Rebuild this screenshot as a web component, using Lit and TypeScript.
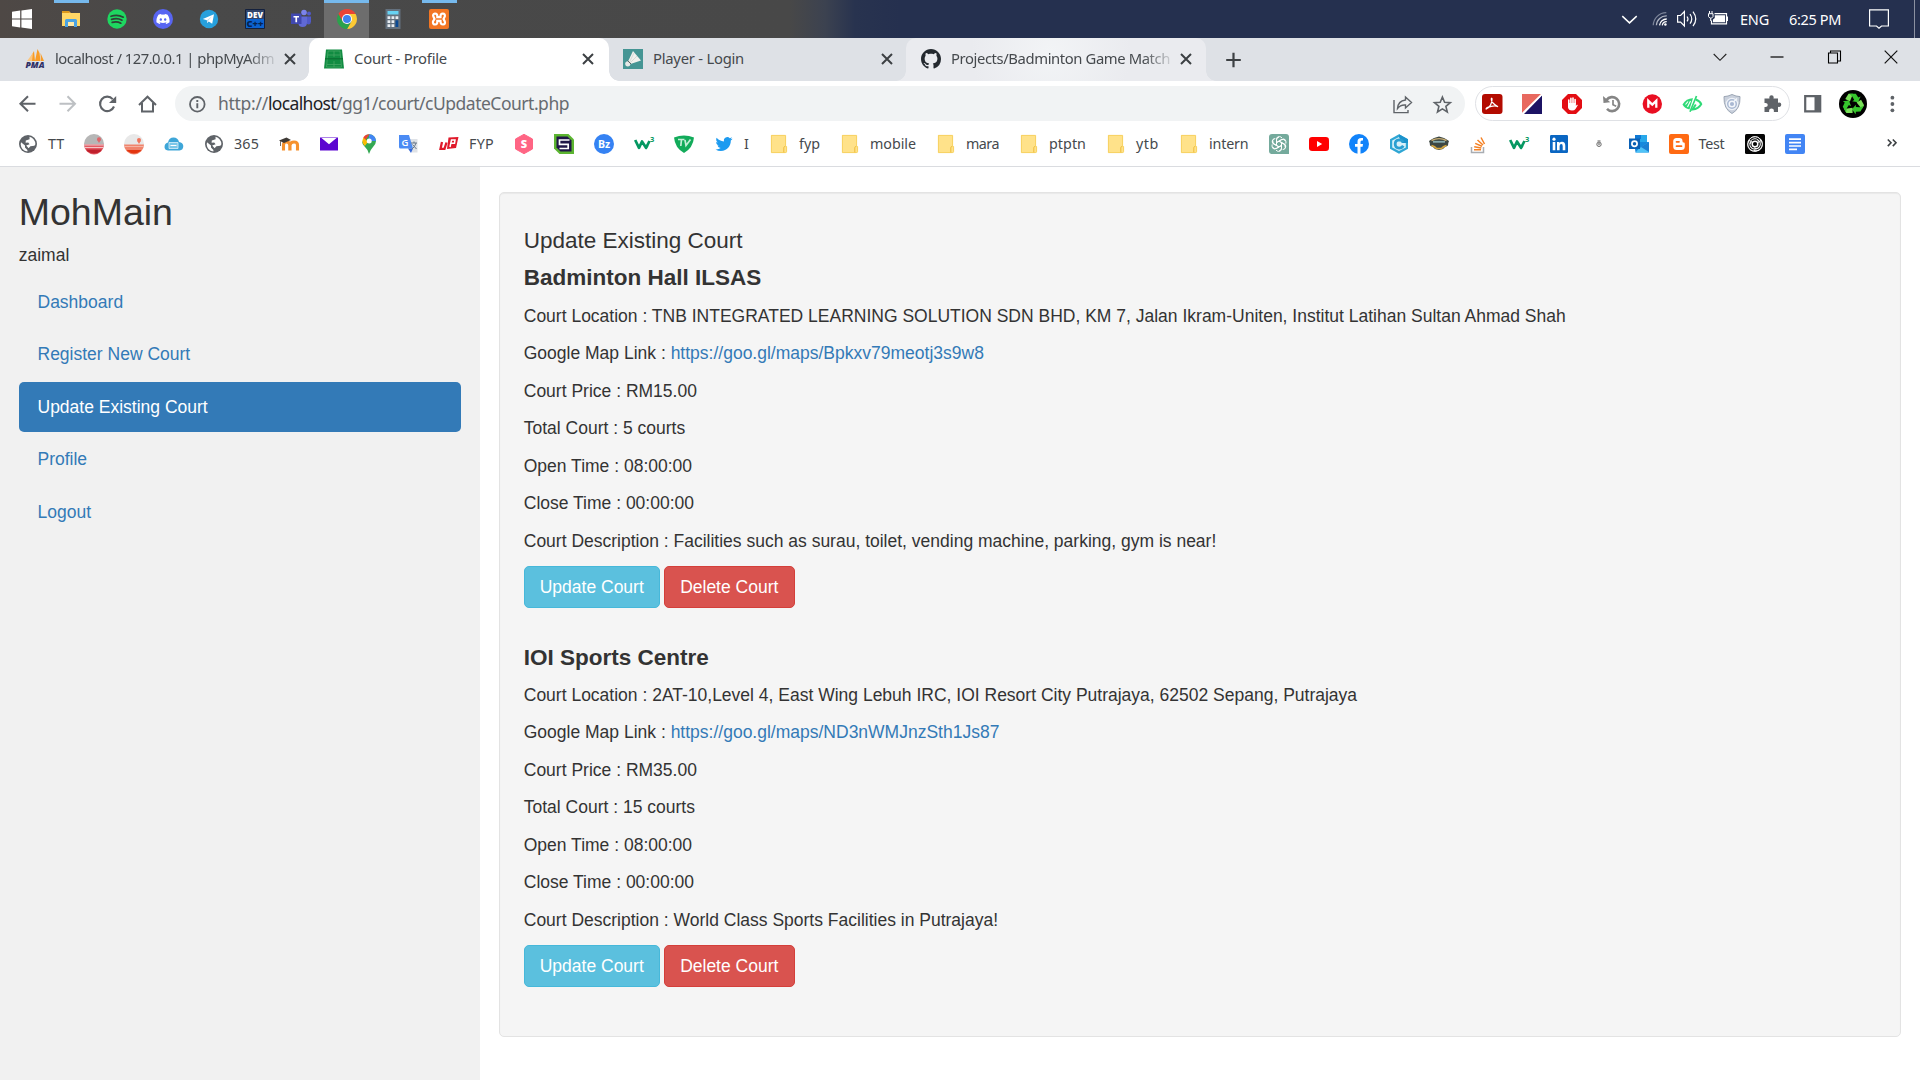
import { LitElement, html, svg, css, nothing } from "lit";
import { customElement, property } from "lit/decorators.js";

const globe = svg`<circle cx="10" cy="10" r="9" fill="#5f6368"/><path d="M3 8.200 7 11.600V13.600L9.400 16 9.400 17.400Q3.200 16.600 2.700 10.500Z" fill="#fff"/><path d="M11.500 2.700Q17 4.200 17.400 10.200L16.400 11.800 12.400 12.200 10.600 14.200 8.200 11.600 11.600 10.200 10.200 8.600 7.600 8.800 7.800 6.600 11.600 5.200Z" fill="#fff"/>`;
const folder = svg`<path d="M2.500 1H15.500Q17 1 17 2.500V12.500H18V17Q18 19 16 19H3.500Q2 19 2 17.500V1.500Z" fill="#ffe28a"/><path d="M2.400 1.400H16.600V12.500H17.600V17.500Q17.600 18.600 16.400 18.600H2.400Z" fill="none" stroke="#f6cf5c" stroke-width=".9"/><path d="M14.800 18.400V13.500Q14.800 12.600 16 12.600" fill="none" stroke="#eebd3b"/>`;
const w3 = svg`<path d="M1.200 6 5 13.800 8 7.500 12 13.800 15.500 7" fill="none" stroke="#059862" stroke-width="2.700" stroke-linejoin="round"/><path d="M10.500 10.500 12 15.500 14.500 12Z" fill="#059862"/><text x="16" y="8" font-family="Open Sans" font-weight="700" font-size="7.500" fill="#059862">3</text>`;
const clearX = svg`<path d="M5 5 15 15M15 5 5 15" stroke="#3c4043" stroke-width="2" fill="none"/>`;

const ICONS: Record<string, unknown> = {
  windows: svg`<path d="M0 2.800 8.200 1.600V9.500H0ZM9.400 1.400 20 0V9.500H9.400ZM0 10.600H8.200V18.500L0 17.300ZM9.400 10.600H20V20L9.400 18.600Z" fill="#fff"/>`,
  explorer: svg`<path d="M1 2H8L10 4H1Z" fill="#e8a33d"/><path d="M1 4H19V17H1Z" fill="#ffd766"/><path d="M1 2H8V4H1Z" fill="#dd9a1d"/><path d="M4 18V11.500Q4 10 5.500 10H14.500Q16 10 16 11.500V18H13V13H7V18Z" fill="#4ba3e3"/><path d="M7 13H13V17H7Z" fill="#ffe9a6"/>`,
  spotify: svg`<circle cx="10" cy="10" r="9.700" fill="#1ed760"/><path d="M4 7.300Q10.500 5 16.300 8.200M4.600 10.400Q10.300 8.600 15 11.200M5.200 13.400Q10 12 13.800 14.200" stroke="#2e4235" stroke-linecap="round" fill="none" stroke-width="1.700"/>`,
  discord: svg`<circle cx="10" cy="10" r="10" fill="#5865f2"/><g transform="translate(3.400 3.400) scale(.55)"><path d="M20.317 4.370a19.800 19.800 0 0 0-4.885-1.515 13.800 13.800 0 0 0-.676 1.370 18.300 18.300 0 0 0-5.500 0 12.600 12.600 0 0 0-.677-1.370 19.700 19.700 0 0 0-4.885 1.515C.533 9.046-.32 13.580.099 18.058a19.900 19.900 0 0 0 5.993 3.030 14 14 0 0 0 1.226-1.994 13 13 0 0 1-1.872-.892l.372-.292a14.200 14.200 0 0 0 12.362 0l.373.292a12.300 12.300 0 0 1-1.873.892 16 16 0 0 0 1.225 1.993 19.800 19.800 0 0 0 6.002-3.030c.5-5.177-.838-9.674-3.590-13.687zM8.020 15.331c-1.183 0-2.157-1.086-2.157-2.419s.956-2.419 2.157-2.419 2.176 1.095 2.157 2.419c0 1.333-.956 2.419-2.157 2.419zm7.975 0c-1.183 0-2.157-1.086-2.157-2.419s.955-2.419 2.157-2.419 2.176 1.095 2.157 2.419c0 1.333-.946 2.419-2.157 2.419z" fill="#fff"/></g>`,
  telegram: svg`<circle cx="10" cy="10" r="9.200" fill="#27a0dc"/><path d="M3.800 9.900 15 5.300 13.200 14.800 9.700 12.400 8.100 14 7.900 11.300Z" fill="#fff"/><path d="M7.900 11.300 13 7.200 9 11.900 8.100 14Z" fill="#bcdcf0"/>`,
  dev: svg`<path d="M.5.500H19.500V19.500H.5Z" fill="#0b62cf" stroke="#14213d"/><path d="M1 1H19V10H1Z" fill="#32456b"/><text x="10" y="8.800" text-anchor="middle" font-family="Open Sans" font-weight="800" font-size="8" textLength="16" fill="#fff">DEV</text><text x="10" y="18" text-anchor="middle" font-family="Open Sans" font-weight="800" font-size="9.500" textLength="17" lengthAdjust="spacingAndGlyphs" fill="#06234f">C++</text>`,
  teams: svg`<circle cx="13" cy="3.500" r="2.800" fill="#7b83eb"/><circle cx="18" cy="4.600" r="2" fill="#5059c9"/><path d="M8 7.500H16V13.500Q16 18 11.500 18 8 18 7.500 15Z" fill="#6069d6"/><path d="M16 7.500H20V12.500Q20 15 17.500 15.500L16 15Z" fill="#5059c9"/><path d="M0 4.500H10.500V15H0Z" fill="#4048b0"/><path d="M2.500 7H8V8.600H6.100V13.200H4.400V8.600H2.500Z" fill="#fff"/>`,
  chrome: svg`<path d="M10 5H18.660A10 10 0 0 1 10 20L14.330 12.500Z" fill="#fcc934"/><path d="M1.340 5A10 10 0 0 1 18.660 5H10L5.600 12.400Z" fill="#ea4335"/><path d="M1.340 5 5.670 12.500A5 5 0 0 0 10 15.200L14.300 12.500 10 20A10 10 0 0 1 1.340 5Z" fill="#2ba24c"/><circle cx="10" cy="10" r="5" fill="#fff"/><circle cx="10" cy="10" r="4" fill="#3f82ee"/>`,
  calc: svg`<path d="M2.500 0H17.500V20H2.500Z" fill="#64717e"/><path d="M4.500 2H15.500V5.500H4.500Z" fill="#67d3f3"/><path d="M4.500 7.300h2.800v2.700H4.500zM8.500 7.300h2.800v2.700H8.500zM12.500 7.300h2.800v2.700h-2.800zM4.500 11.300h2.800v2.700H4.500zM8.500 11.300h2.800v2.700H8.500zM4.500 15.300h2.800V18H4.500zM8.500 15.300h2.800V18H8.500z" fill="#e8edf2"/><path d="M12.500 11.300h2.800V18h-2.800z" fill="#0a4a94"/>`,
  xampp: svg`<rect width="20" height="20" rx="2" fill="#f37623"/><path d="M6 4.500Q3.500 5 4.300 7.300L5.500 10 4 12.500Q3.500 15.500 6.300 15.500 8.500 15.400 8.300 12.500V11.800H11.500V12.500Q11.500 15.500 14 15.500 16.600 15.200 15.800 12.500L14.500 10 15.800 7.500Q16.300 4.600 13.800 4.500 11.500 4.700 11.500 7V8.200H8.300V7Q8.300 4.600 6 4.500Z" fill="none" stroke="#fff" stroke-width="2.200"/>`,
  chevron: svg`<path d="M1.500 6 10 14 18.500 6" fill="none" stroke="#fff" stroke-width="1.700"/>`,
  wifi: svg`<g fill="none" stroke-width="1.400"><path d="M2.500 17A14.500 14.500 0 0 1 17 3" stroke="#7d859a"/><path d="M6 17A11 11 0 0 1 17.500 6.500" stroke="#aeb3c1"/><path d="M9.500 17A8 8 0 0 1 17.500 10" stroke="#fff"/><path d="M12.500 17A5 5 0 0 1 17.500 13" stroke="#fff"/></g><circle cx="16" cy="16" r="1.400" fill="#fff"/>`,
  speaker: svg`<g fill="none" stroke="#fff" stroke-width="1.200"><path d="M.6 6.500H3.600L7.400 2.600V17L3.600 13.200H.6Z"/><path d="M10 7.500Q12 10 10 12.300M13 5Q16.500 10 13 14.600M16 2.600Q21.500 10 16 17.200"/></g>`,
  battery: svg`<path d="M6.500 4.600H18.500V14.800H3.500V11.500" fill="none" stroke="#fff" stroke-width="1.200"/><path d="M6.800 6.300H17V13.200H5V10.500L6.800 9Z" fill="#fff"/><path d="M19.500 7.500V12M1.500 2V4.500M4 2V4.500M.5 4.700H5V7.500L3.500 9.200H2L.5 7.500ZM2.700 9.500V12" fill="none" stroke="#fff"/>`,
  notify: svg`<path d="M.6.800H19.400V17H12.500L10 19.300 7.500 17H.6Z" fill="none" stroke="#fff" stroke-width="1.200"/>`,
  pma: svg`<path d="M9 2 3.500 12H10ZM12.500 0 10 12H15.500L14.500 4ZM15.500 4 16 12H19Z" fill="#f89c27"/><path d="M8 4 7 12H2Z" fill="#fbc681"/><text x="10" y="19" text-anchor="middle" font-family="Open Sans" font-weight="800" font-style="italic" font-size="8" textLength="19" lengthAdjust="spacingAndGlyphs" fill="#2f3066">PMA</text>`,
  court: svg`<path d="M2 .5H18L20 19.500H0Z" fill="#118c42"/><path d="M4 2H16L17.500 18H2.500ZM10 2V8M10 12V18M3.500 6H16.500M3 15.500H17" stroke="#4aa968" stroke-width=".7" fill="none"/><path d="M1 9.800H19" stroke="#0b6e32" stroke-width="1.200"/>`,
  shuttle: svg`<path d="M0 0H20V20H0Z" fill="#459594"/><path d="M10 2 18 11.500 7.500 15 5 12.500Z" fill="#f1f1ee"/><path d="M11 4 6.500 13M14 7 7 14" stroke="#c8d0cd" stroke-width=".7"/><circle cx="4.800" cy="14.800" r="2.600" fill="#e7e9e7"/><path d="M4.600 11.700 8 15" stroke="#55605f"/>`,
  github: svg`<path transform="scale(1.250)" d="M8 0C3.580 0 0 3.580 0 8c0 3.540 2.290 6.530 5.470 7.590.4.070.55-.17.55-.38 0-.19-.01-.82-.01-1.490-2.010.37-2.530-.49-2.690-.94-.09-.23-.48-.94-.82-1.130-.28-.15-.68-.52-.01-.53.63-.01 1.080.58 1.230.82.72 1.210 1.870.87 2.330.66.07-.52.28-.87.51-1.070-1.780-.2-3.640-.89-3.640-3.950 0-.87.31-1.590.82-2.150-.08-.2-.36-1.020.08-2.120 0 0 .67-.21 2.200.82.64-.18 1.320-.27 2-.27s1.360.09 2 .27c1.530-1.040 2.200-.82 2.200-.82.44 1.100.16 1.920.08 2.120.51.56.82 1.270.82 2.150 0 3.070-1.870 3.750-3.650 3.950.29.25.54.73.54 1.480 0 1.070-.01 1.930-.01 2.200 0 .21.15.46.55.38A8.010 8.010 0 0 0 16 8c0-4.420-3.580-8-8-8Z" fill="#24292f"/>`,
  tabx: clearX,
  plus: svg`<path d="M10.500 2.700V17.300M3.200 10H17.800" stroke="#3c4043" stroke-width="2.200"/>`,
  wchev: svg`<path d="M3.700 7 10 13.300 16.300 7" fill="none" stroke="#222" stroke-width="1.100"/>`,
  wmin: svg`<path d="M3.500 10H16.500" stroke="#000" stroke-width="1.200"/>`,
  wres: svg`<path d="M4.500 6H13.500V16H4.500ZM6.500 6V4H16.500V14H14" fill="none" stroke="#000" stroke-width="1.100"/>`,
  wclose: svg`<path d="M3.700 3.700 16.300 16.300M16.300 3.700 3.700 16.300" stroke="#111" stroke-width="1.200"/>`,
  back: svg`<path d="M18.500 9.800H4M11 2.300 3.400 9.800 11 17.300" fill="none" stroke="#5f6368" stroke-width="2"/>`,
  forward: svg`<path d="M2.500 9.800H17M10.500 2.300 18 9.800 10.500 17.300" fill="none" stroke="#bdc0c3" stroke-width="2"/>`,
  reload: svg`<path d="M17 12.500A7.200 7.200 0 1 1 15.700 5.100" fill="none" stroke="#5f6368" stroke-width="2.100"/><path d="M19.200 2V9H12Z" fill="#5f6368"/>`,
  home: svg`<path d="M2 11 10.500 2.700 19 11M5 9V17.500H16V9" fill="none" stroke="#5f6368" stroke-width="2"/>`,
  info: svg`<circle cx="10.300" cy="10.300" r="7.300" fill="none" stroke="#5f6368" stroke-width="1.800"/><path d="M10.300 9.200V14.200M10.300 6V8" stroke="#5f6368" stroke-width="1.900"/>`,
  share: svg`<path d="M2 6V18.600H16V16" fill="none" stroke="#5f6368" stroke-width="1.400"/><path d="M13.500 3 19.500 8.500 13.500 14V11Q8.500 10.500 5.500 14.500 6 7 13.500 6Z" fill="none" stroke="#5f6368" stroke-width="1.400"/>`,
  star: svg`<path d="M10.400 3 12.600 8.300 18.300 8.700 13.900 12.400 15.300 18 10.400 14.900 5.500 18 6.900 12.400 2.500 8.700 8.200 8.300Z" fill="none" stroke="#5f6368" stroke-width="1.600"/>`,
  acrobat: svg`<rect width="20.500" height="20" rx="3" fill="#b30b00"/><path d="M4.200 15Q10 12 10 5 10 3.600 9.300 4.800 9 9 16 12.800 13 10.500 5 13.700 3.800 14.600 4.200 15Z" fill="none" stroke="#fff" stroke-width="1.300"/>`,
  ext2: svg`<path d="M0 0H20L0 19.500Z" fill="#e8695f"/><path d="M20 1.500V20H2Z" fill="#1c1364"/><path d="M20 0 0 20" stroke="#fff" stroke-width="1.600"/>`,
  block: svg`<path d="M6 0H14L20 6V14L14 20H6L0 14V6Z" fill="#e30d13"/><path d="M6.800 10V6M8.900 9.500V4.400M11 9.500V4M13.100 9.500V5.500" stroke="#fff" stroke-width="1.600" stroke-linecap="round"/><path d="M6 9H13.900V12L15 10.500 15.800 11.300 13.500 15Q12.500 16.500 10 16.500 6.500 16.500 6 13.500Z" fill="#fff"/>`,
  history: svg`<path d="M4.500 6A7 7 0 1 1 5 14.800" fill="none" stroke="#858585" stroke-width="2.600"/><path d="M1 2 1.500 9 8.300 8.300Z" fill="#858585"/><path d="M11 6V10.700L14.200 12.200" fill="none" stroke="#858585" stroke-width="1.700"/>`,
  mega: svg`<circle cx="10.300" cy="10" r="9.700" fill="#e90f22"/><path d="M6.300 13.800V6.800L10.300 10.600 14.300 6.800V13.800" fill="none" stroke="#fff" stroke-width="2.300"/>`,
  leaf: svg`<path d="M.5 10.500Q4.500 4 11 4.200L7.500 15.600Q2.500 14.500 .5 10.500Z" fill="#2fda77"/><path d="M3.500 10.500 6 7.500M5.500 13 8.500 7" stroke="#fff" stroke-width="1.100"/><path d="M13.800 5.500Q18 7 19.200 10.200 16.500 14.800 10.500 15.500L13.800 10.500" fill="none" stroke="#2fda77" stroke-width="2"/><path d="M14.500 2 8 17.800" stroke="#2fda77" stroke-width="1.700"/>`,
  shield: svg`<path d="M10 .5Q14 2.500 18 2.600 18.500 15 10 19.500 1.500 15 2 2.600 6 2.500 10 .5Z" fill="#c9d0dc" stroke="#9ca6b5"/><circle cx="10" cy="10" r="5.600" fill="#a9b8d2" stroke="#eef2f8" stroke-width="1.200"/><circle cx="10" cy="10" r="2.800" fill="none" stroke="#f4f7fb" stroke-width="1.500"/><path d="M12 7.500 15 4.500" stroke="#f4f7fb" stroke-width="1.500"/>`,
  puzzle: svg`<path d="M2.500 4.500H7.500Q6.700 1.300 9.500 1.200 12.300 1.300 11.500 4.500H16V8.800Q19.200 8 19.300 10.800 19.200 13.600 16 12.700V18H11.800Q12.500 14.700 9.500 14.600 6.500 14.700 7.200 18H2.500V13Q5.700 13.500 5.800 11 5.700 8.500 2.500 9Z" fill="#5f6368"/>`,
  panel: svg`<path d="M3.200 2.200H18.200V17.400H3.200Z" fill="none" stroke="#5f6368" stroke-width="2.200"/><path d="M12.500 2H18.500V18H12.500Z" fill="#5f6368"/>`,
  avatar: svg`<circle cx="10" cy="10" r="10" fill="#000"/><g fill="#35c62c">${[0, 120, 240].map(a => svg`<g transform="rotate(${a} 10 10)"><path d="M4.500 6.500 6.800 2.700H10L7.800 8.300Z" fill="#7be05a"/><path d="M7.400 2.700H12L13.800 5.400 15.400 4.700 13.600 8.800 9.400 8 10.900 7.100 9.600 4.800Z"/></g>`)}</g>`,
  dots: svg`<g fill="#5f6368"><circle cx="10.400" cy="3.700" r="1.900"/><circle cx="10.400" cy="10" r="1.900"/><circle cx="10.400" cy="16.300" r="1.900"/></g>`,
  globe,
  folder,
  w3,
  ball1: svg`<circle cx="10" cy="10" r="10" fill="#b6b6b6"/><path d="M0 10.500H20A10 10 0 0 1 0 10.500Z" fill="#e35b64"/><path d="M2 15.500H18A10 10 0 0 1 2 15.500Z" fill="#c0202c"/><path d="M0 11H20M0 13.500H20" stroke="#f3c3c5"/><circle cx="15" cy="5.300" r="2" fill="#e0656a"/><path d="M13.300 6 15 9 16.700 6Z" fill="#e0656a"/>`,
  ball2: svg`<circle cx="10" cy="10" r="10" fill="#e8e8e8"/><path d="M0 10.500H20A10 10 0 0 1 0 10.500Z" fill="#f0846c"/><path d="M2.500 16H17.500A10 10 0 0 1 2.500 16Z" fill="#e3350f"/><path d="M0 12.500H20" stroke="#f5b3a4"/><circle cx="15" cy="6" r="2" fill="#f0745c"/><path d="M13.300 7 15 10 16.700 7Z" fill="#f0745c"/>`,
  cloud: svg`<path d="M4 16.500Q0 16 .6 12 1 9 4 8.500 5 3.500 9.500 3.500 14 3.500 15 8 19 8.500 19.300 12 19.300 16 15.500 16.500Z" fill="#3ea6d8"/><path d="M5 8.500H14V14.500H5Z" fill="#7cc7e8" stroke="#d9f0fa" stroke-width=".8"/><path d="M6.500 11.500H12.500" stroke="#fff"/>`,
  moodle: svg`<path d="M3.500 17V11.500Q3.500 8.500 6.500 8.500T9.800 11.500V17M10 17V11.500Q10.500 8.500 14 8.500T17.500 11.500V17" transform="translate(1 -.5)" fill="none" stroke="#f6922e" stroke-width="3.100"/><path d="M0 6.500 7.500 3.500 12 6 5 9Z" fill="#3f3a36"/><path d="M1.500 7V12" stroke="#756c64"/>`,
  mail: svg`<path d="M1 3.500H19V16.500H1Z" fill="#5b05d0"/><path d="M2.500 4 10 10.300 17.500 4Z" fill="#fff"/>`,
  maps: svg`<path d="M3.300 8 7 1 10 .3Q16.500.8 17 7 17 10 14 13 11.500 15.500 10 20 8.500 15 6 13 3 10 3.300 8Z" fill="#34a853"/><path d="M10 .3Q16.500.8 17 7L10 7Z" fill="#4285f4"/><path d="M4.300 3.500Q6.500.3 10.500.3L6.300 6.500Z" fill="#ea4335"/><path d="M4.300 3.500Q2.800 6.500 4 9.500L5.800 12 9 8 6.500 5.500Z" fill="#fbbc04"/><circle cx="10.200" cy="6.900" r="2.500" fill="#fff"/>`,
  translate: svg`<path d="M8 5H18.500V18.500H13Z" fill="#dfe2e6"/><path d="M0 1H10L14 14.500H1.500Q0 14.500 0 13Z" fill="#4b8bf4"/><path d="M9 14.500H14L12 19Z" fill="#3367d6"/><text x="2.500" y="11.500" font-family="Open Sans" font-weight="600" font-size="9.500" fill="#fff">G</text><path d="M12 9H18M15 7.500V9M17 9Q16 13 13 15M13.500 10.500 17.500 15" stroke="#68788a" fill="none"/>`,
  fyp: svg`<path d="M9.500 3.500 19.500 3 17 14 8 15Z" fill="#e0192a"/><path d="M3 8 1.500 14.800H5.500L7.500 8.500" stroke="#e0192a" stroke-width="2.300" fill="none"/><path d="M11 13 12.500 6H16L15.500 9.300H12.500" stroke="#fff" stroke-width="1.500" fill="none"/>`,
  hexs: svg`<path d="M10 .3 18.500 5V15L10 19.700 1.500 15V5Z" fill="#ff6584" stroke="#ff6584" stroke-linejoin="round"/><text x="10" y="14" text-anchor="middle" font-family="Open Sans" font-weight="800" font-size="11" fill="#fff">S</text>`,
  five: svg`<path d="M0 0H14.500L20 5.500V20H5.500L0 14.500Z" fill="#5cb531"/><path d="M2.500 2.500H13.500L17.500 6.500V17.500H6.500L2.500 13.500Z" fill="#1f1647"/><path d="M15.500 6H5.500V10.300H14.200V14.500H5.500" stroke="#fff" stroke-width="1.700" fill="none"/>`,
  bz: svg`<circle cx="10" cy="10" r="10" fill="#3582f3"/><text x="10" y="14" text-anchor="middle" font-family="Open Sans" font-weight="700" font-size="10.500" fill="#fff">Bz</text>`,
  tv: svg`<path d="M0 3.500Q10-.5 20 3.500 19 14 10 19 1 14 0 3.500Z" fill="#12ab5a"/><path d="M4 5.500H10.500M7.500 5.500 6.800 12M11 6 12 11.500 16.500 5.500" stroke="#c4edd6" stroke-width="1.700" fill="none"/>`,
  twitter: svg`<path transform="translate(1.500 1.500) scale(.71)" d="M23.953 4.570a10 10 0 0 1-2.825.775 4.958 4.958 0 0 0 2.163-2.723c-.951.555-2.005.959-3.127 1.184a4.920 4.920 0 0 0-8.384 4.482C7.690 8.095 4.067 6.130 1.640 3.162a4.822 4.822 0 0 0-.666 2.475c0 1.710.87 3.213 2.188 4.096a4.904 4.904 0 0 1-2.228-.616v.06a4.923 4.923 0 0 0 3.946 4.827 4.996 4.996 0 0 1-2.212.085 4.936 4.936 0 0 0 4.604 3.417 9.867 9.867 0 0 1-6.102 2.105c-.39 0-.779-.023-1.170-.067a13.995 13.995 0 0 0 7.557 2.209c9.053 0 13.998-7.496 13.998-13.985 0-.21 0-.42-.015-.63A9.935 9.935 0 0 0 24 4.590z" fill="#1d9bf0"/>`,
  gpt: svg`<path d="M3 0H17Q20 0 20 3V20H3Q0 20 0 17V3Q0 0 3 0Z" fill="#74aa9c"/><g fill="none" stroke="#fff" stroke-width="1">${[0, 60, 120, 180, 240, 300].map(a => svg`<path transform="rotate(${a} 10 10)" d="M7.500 11.400V5.200Q7.700 2.600 10.300 2.600 12 2.600 13 4M7.500 8.600 12.300 5.800Q14.500 4.700 16 6.500"/>`)}</g>`,
  youtube: svg`<rect x="0" y="3" width="20" height="14" rx="3.200" fill="#f00"/><path d="M8 7 13.200 10 8 13Z" fill="#fff"/>`,
  facebook: svg`<circle cx="10" cy="10" r="10" fill="#1183fa"/><path d="M8.500 20V12.800H6V9.900H8.500V7.700Q8.500 4 12.200 4H14V6.500H12.800Q11.500 6.500 11.500 8V9.900H14L13.600 12.800H11.500V20Z" fill="#fff"/>`,
  chex: svg`<path d="M10 .3 19 5.200V14.800L10 19.700 1 14.800V5.200Z" fill="#2fa6d4"/><path d="M10 3 16.800 6.600V13.400L10 17 3.200 13.400V6.600Z" fill="#d8f0f9"/><path d="M10 .3 19 5.200V9H13L10 3Z" fill="#1c93cc"/><path d="M14.300 8.200Q13 5.900 10.200 5.900 6.200 6.100 6.200 10T10.200 14.100Q13 14.100 14.300 11.800" fill="none" stroke="#2a9fd2" stroke-width="2.800"/>`,
  badge: svg`<path d="M0 7Q3 5 5 4L10 2.500 15 4Q17 5 20 7 19 9 19 11.500 15 13 14 15L10 16 6 15Q5 13 1 11.500 1 9 0 7Z" fill="#3d4742"/><path d="M2.500 6.500Q10 2.800 17.500 6.500" fill="none" stroke="#c9ae74" stroke-width="1.400"/><path d="M4 7.800H16" stroke="#86a9ab" stroke-width="1.800"/><path d="M2.500 11.500Q6 12.500 7.500 14.500H12.500Q14 12.500 17.500 11.500" fill="none" stroke="#d9a83f" stroke-width="1.600"/>`,
  stack: svg`<path d="M2.500 13V18.500H14.500V13" fill="none" stroke="#a9adb2" stroke-width="1.500"/><path d="M5 15.800H12M5.200 12.800 12.300 14M6.200 9.400 13 12.300M8.500 6 14 11M12 3.500 15.500 10" stroke="#f48024" stroke-width="1.500"/>`,
  linkedin: svg`<rect x="1" y="1" width="18" height="18" rx="1.200" fill="#0a66c2"/><path d="M3.700 8H6.300V16.300H3.700ZM8 8H10.500V9.200Q11.200 7.800 13 7.800 16.300 7.800 16.300 11.700V16.300H13.700V12.200Q13.700 10.100 12.300 10.100 10.600 10.100 10.600 12.200V16.300H8Z" fill="#fff"/><circle cx="5" cy="5.200" r="1.600" fill="#fff"/>`,
  tiny: svg`<circle cx="10" cy="10.300" r="2.200" fill="#f2f2f2" stroke="#6c6c6c" stroke-width="1"/><path d="M8.500 7H11.500" stroke="#777" stroke-width="1.200"/><circle cx="10" cy="10" r=".8" fill="#444"/>`,
  outlook: svg`<path d="M6 1H18V8H6Z" fill="#28a8ea"/><path d="M6 1H12V5H6Z" fill="#0f78d4"/><path d="M5 8H20V18.500H6.500Z" fill="#1689dd"/><path d="M20 8 10 14.500 6.500 18.500H18.500Q20 18.500 20 17Z" fill="#4fc3f7"/><path d="M20 8 12 13 20 18Z" fill="#1b7fd2"/><path d="M0 4.500H11V15H0Z" fill="#0a60b5"/><circle cx="5.500" cy="9.800" r="2.600" fill="none" stroke="#fff" stroke-width="1.700"/>`,
  blogger: svg`<rect width="20" height="20" rx="2" fill="#ff6a13"/><path d="M7.500 4H10.500Q13.500 4 13.500 7.300 13.500 8.500 14.700 8.500 15.800 8.500 15.800 9.800V12.500Q15.800 16 12.300 16H7.700Q4.200 16 4.200 12.500V7.500Q4.200 4 7.500 4Z" fill="#fff"/><path d="M7.500 7.800H10M7.500 12.200H12.500" stroke="#ff6a13" stroke-width="1.700" stroke-linecap="round"/>`,
  swirl: svg`<rect width="20" height="20" rx="1.500" fill="#050505"/><g fill="none" stroke="#f5f5f5" stroke-width="1">${[0, 120, 240].map(a => svg`<path transform="rotate(${a} 10 10)" d="M3 8Q5 2.400 10.500 2.600 15.500 3.200 16 8M5 10Q5 5 10 4.700 14 5 13.800 9"/>`)}</g><circle cx="10" cy="10" r="2.800" fill="none" stroke="#fff" stroke-width="1.500"/><circle cx="10" cy="10" r="7.200" fill="none" stroke="#fff" stroke-width=".6"/>`,
  docs: svg`<rect width="20" height="20" rx="2" fill="#4285f4"/><path d="M4 5.200H16M4 8.600H16M4 12H16M4 15.300H12" stroke="#fff" stroke-width="1.700"/>`,
  more: svg`<path d="M3.800 6.500 7 9.800 3.800 13.100M8.800 6.500 12 9.800 8.800 13.100" fill="none" stroke="#3c4043" stroke-width="1.600"/>`,
};

@customElement("ui-icon")
class UiIcon extends LitElement {
  @property() name = "";
  @property({ type: Number }) size = 20;
  static styles = css`
    :host { display: block; flex: none; }
    .glyph { display: block; overflow: visible; }
  `;
  render() {
    return html`<svg class="glyph" width=${this.size} height=${this.size} viewBox="0 0 20 20">${ICONS[this.name] ?? nothing}</svg>`;
  }
}

/** One line of text whose tracking is adjusted so that it fills a given width. */
@customElement("fit-text")
class FitText extends LitElement {
  @property({ type: Number }) w = 0;
  @property() text = "";
  static styles = css`
    :host { display: block; flex: none; white-space: pre; }
    .line { display: inline-block; }
  `;
  updated() {
    const el = this.renderRoot.querySelector(".line") as HTMLElement;
    el.style.letterSpacing = "0px";
    const natural = el.getBoundingClientRect().width;
    el.style.letterSpacing = `${(this.w - natural) / this.text.length}px`;
    this.style.width = `${this.w}px`;
  }
  render() {
    return html`<span class="line">${this.text}</span>`;
  }
}

@customElement("task-bar")
class TaskBar extends LitElement {
  static styles = css`
    :host { display: flex; height: 38px; justify-content: space-between; font-family: "Noto Sans", sans-serif; color: #fff;
      background: linear-gradient(90deg, #4e4845 0, #494949 160px, #484848 790px, #3c4250 825px, #28334f 855px, #25304f 900px, #25304f 100%); }
    .apps { display: flex; }
    .app { width: 46px; box-sizing: border-box; display: flex; justify-content: center; align-items: center; border-top: 3px solid transparent; padding-bottom: 3px; }
    .start { width: 48px; padding-right: 4px; }
    .running { background: linear-gradient(#76b9ed, #76b9ed) center top / 35px 3px no-repeat border-box; }
    .current { background: #6d6d6d; border-top-color: #76b9ed; width: 45px; margin-right: 1px; }
    .tray { display: grid; grid-template-columns: 20px 16px 21px 22px 39px 70px 35px 1px; column-gap: 10px; align-items: center; font-size: 14.500px; padding-right: 5px; }
    .line { width: 1px; height: 38px; background: #8b91a1; }
  `;
  render() {
    const apps = ["explorer", "spotify", "discord", "telegram", "dev", "teams", "chrome", "calc", "xampp"];
    return html`
      <div class="apps">
        <div class="app start"><ui-icon name="windows"></ui-icon></div>
        ${apps.map(a => html`<div class="app ${a === "chrome" ? "current" : a === "explorer" || a === "xampp" ? "running" : ""}"><ui-icon name=${a}></ui-icon></div>`)}
      </div>
      <div class="tray">
        <ui-icon name="chevron" size="17"></ui-icon>
        <ui-icon name="wifi" size="18"></ui-icon>
        <ui-icon name="speaker" size="20"></ui-icon>
        <ui-icon name="battery" size="20"></ui-icon>
        <fit-text text="ENG" w="29"></fit-text>
        <fit-text text="6:25 PM" w="52"></fit-text>
        <ui-icon name="notify" size="20"></ui-icon>
        <div class="line"></div>
      </div>`;
  }
}

interface Tab { icon: string; title: string; w: number; kind: string; }
const TABS: Tab[] = [
  { icon: "pma", title: "localhost / 127.0.0.1 | phpMyAdm", w: 219, kind: "first" },
  { icon: "court", title: "Court - Profile", w: 93, kind: "active" },
  { icon: "shuttle", title: "Player - Login", w: 91, kind: "third" },
  { icon: "github", title: "Projects/Badminton Game Match", w: 219, kind: "hover" },
];

@customElement("tab-strip")
class TabStrip extends LitElement {
  static styles = css`
    :host { display: flex; height: 43px; background: #dee1e6; font: 14.800px/20px "Noto Sans", sans-serif; color: #45494d; justify-content: space-between; }
    .tabs, .controls { display: flex; align-items: center; }
    .tab { display: flex; align-items: center; height: 43px; box-sizing: border-box; padding: 0 11px 1px 15px; position: relative; }
    .title { flex: 1; overflow: hidden; margin-left: 10px; padding-bottom: 2px; }
    .first { width: 309px; padding-left: 25px; padding-right: 9px; }
    .active { width: 300px; background: #fff; border-radius: 10px 10px 0 0; }
    .third { width: 297px; padding-left: 14px; padding-right: 9px; }
    .hover { width: 300px; background: radial-gradient(circle 80px at 145px 14px, #f2f4f6, #eaebef); border-radius: 10px 10px 0 0; padding-left: 15px; padding-right: 10px; }
    .first .title, .hover .title { flex: none; width: 219px; -webkit-mask: linear-gradient(90deg, #000 192px, transparent 225px); }
    .first ui-icon:last-child, .hover ui-icon:last-child { margin-left: auto; }
    .active::before, .active::after, .hover::before, .hover::after { content: ""; position: absolute; bottom: 0; width: 10px; height: 10px; }
    .active::before { left: -10px; background: radial-gradient(circle at 0 0, transparent 9.500px, #fff 10px); }
    .active::after { right: -10px; background: radial-gradient(circle at 100% 0, transparent 9.500px, #fff 10px); }
    .hover::before { left: -10px; background: radial-gradient(circle at 0 0, transparent 9.500px, #eaebef 10px); }
    .hover::after { right: -10px; background: radial-gradient(circle at 100% 0, transparent 9.500px, #eaebef 10px); }
    .plus { margin-left: 17px; }
    .controls { gap: 37px; padding-right: 19px; padding-bottom: 5px; }
  `;
  render() {
    return html`
      <div class="tabs">
        ${TABS.map(t => html`<div class="tab ${t.kind}"><ui-icon name=${t.icon}></ui-icon><div class="title"><fit-text text=${t.title} w=${t.w}></fit-text></div><ui-icon name="tabx"></ui-icon></div>`)}
        <ui-icon class="plus" name="plus"></ui-icon>
      </div>
      <div class="controls">${["wchev", "wmin", "wres", "wclose"].map(n => html`<ui-icon name=${n}></ui-icon>`)}</div>`;
  }
}

@customElement("tool-bar")
class ToolBar extends LitElement {
  static styles = css`
    :host { display: flex; align-items: center; height: 45px; background: #fff; padding-left: 17px; font: 17.500px/24px "Noto Sans", sans-serif; color: #676b70; }
    .nav { display: flex; gap: 20px; width: 158px; }
    .omni { display: flex; align-items: center; width: 1290px; height: 35px; box-sizing: border-box; padding: 0 13px 0 12px; background: #f1f3f4; border-radius: 18px; }
    .url { display: flex; flex: 1; margin-left: 11px; padding-bottom: 1px; }
    .host { color: #202124; }
    .actions { display: flex; gap: 20px; }
    .pill { display: flex; gap: 20px; align-items: center; margin-left: 10px; box-sizing: border-box; width: 315px; height: 35px; border: 1px solid #dfe1e5; border-radius: 18px; padding-left: 6px; }
    .end { display: flex; align-items: center; gap: 16px; margin-left: 12px; }
    .me { margin-left: 1px; margin-right: -1px; }
  `;
  render() {
    return html`
      <div class="nav">${["back", "forward", "reload", "home"].map(n => html`<ui-icon name=${n}></ui-icon>`)}</div>
      <div class="omni">
        <ui-icon name="info"></ui-icon>
        <div class="url"><fit-text text="http://" w="50"></fit-text><fit-text class="host" text="localhost" w="68"></fit-text><fit-text text="/gg1/court/cUpdateCourt.php" w="233"></fit-text></div>
        <div class="actions"><ui-icon name="share"></ui-icon><ui-icon name="star"></ui-icon></div>
      </div>
      <div class="pill">${["acrobat", "ext2", "block", "history", "mega", "leaf", "shield", "puzzle"].map(n => html`<ui-icon name=${n}></ui-icon>`)}</div>
      <div class="end"><ui-icon name="panel"></ui-icon><ui-icon class="me" name="avatar" size="28"></ui-icon><ui-icon name="dots"></ui-icon></div>`;
  }
}

const MARKS: [string, string?, number?][] = [
  ["globe", "TT", 16], ["ball1"], ["ball2"], ["cloud"], ["globe", "365", 25], ["moodle"], ["mail"], ["maps"], ["translate"],
  ["fyp", "FYP", 25], ["hexs"], ["five"], ["bz"], ["w3"], ["tv"], ["twitter", "I", 5], ["folder", "fyp", 21], ["folder", "mobile", 46],
  ["folder", "mara", 33], ["folder", "ptptn", 37], ["folder", "ytb", 23], ["folder", "intern", 39.5], ["gpt"], ["youtube"], ["facebook"],
  ["chex"], ["badge"], ["stack"], ["w3"], ["linkedin"], ["tiny"], ["outlook"], ["blogger", "Test", 26], ["swirl"], ["docs"],
];

@customElement("bookmark-bar")
class BookmarkBar extends LitElement {
  static styles = css`
    :host { display: flex; align-items: center; gap: 20px; height: 41px; box-sizing: border-box; padding: 0 16px 4px 18px; background: #fff; border-bottom: 1px solid #dadce0; font: 14.300px/20px "Noto Sans", sans-serif; color: #45494d; }
    .mark { display: flex; align-items: center; gap: 10px; }
    .mark fit-text { padding-bottom: 1px; }
    .more { margin-left: auto; padding-bottom: 2px; }
  `;
  render() {
    return html`${MARKS.map(([i, t, w]) => html`<div class="mark"><ui-icon name=${i}></ui-icon>${t ? html`<fit-text text=${t} w=${w ?? 0}></fit-text>` : nothing}</div>`)}<ui-icon class="more" name="more"></ui-icon>`;
  }
}

interface Court { name: string; location: string; link: string; price: string; total: string; open: string; close: string; about: string; }
const COURTS: Court[] = [
  { name: "Badminton Hall ILSAS", location: "TNB INTEGRATED LEARNING SOLUTION SDN BHD, KM 7, Jalan Ikram-Uniten, Institut Latihan Sultan Ahmad Shah", link: "https://goo.gl/maps/Bpkxv79meotj3s9w8", price: "RM15.00", total: "5 courts", open: "08:00:00", close: "00:00:00", about: "Facilities such as surau, toilet, vending machine, parking, gym is near!" },
  { name: "IOI Sports Centre", location: "2AT-10,Level 4, East Wing Lebuh IRC, IOI Resort City Putrajaya, 62502 Sepang, Putrajaya", link: "https://goo.gl/maps/ND3nWMJnzSth1Js87", price: "RM35.00", total: "15 courts", open: "08:00:00", close: "00:00:00", about: "World Class Sports Facilities in Putrajaya!" },
];

@customElement("court-page")
class CourtPage extends LitElement {
  static styles = css`
    :host { display: flex; flex: 1; background: #fff; font: 17.500px/25px "Liberation Sans", Arial, sans-serif; color: #333; }
    .side { width: 480px; box-sizing: border-box; background: #f1f1f1; padding: 25px 18.750px 0; }
    h2, h4, h5, p { margin: 0 0 12.500px; font-weight: 400; }
    h2 { font-size: 37.500px; line-height: 41.250px; }
    h4 { font-size: 22.500px; line-height: 24.750px; }
    h5 { font-size: 17.500px; line-height: 19.250px; }
    a { color: #337ab7; text-decoration: none; }
    .menu { display: flex; flex-direction: column; gap: 2.500px; }
    .item { padding: 12.300px 18.750px 12.700px; border-radius: 5px; }
    .on { background: #337ab7; color: #fff; }
    .main { flex: 1; padding: 25px 18.750px 0; }
    .well { box-sizing: border-box; height: 845px; border: 1px solid #e3e3e3; border-radius: 5px; background: #f5f5f5; box-shadow: inset 0 1px 1px rgba(0,0,0,.05); padding: 36px 24px 0; }
    .court { padding-bottom: 37.700px; }
    .name { font-weight: 700; }
    .buttons { display: flex; gap: 4px; }
    .btn { box-sizing: border-box; height: 42px; border: 1px solid #46b8da; border-radius: 5px; background: #5bc0de; color: #fff; padding: 8px 0 0; width: 136px; text-align: center; line-height: 25px; }
    .del { background: #d9534f; border-color: #d43f3a; width: 131px; }
  `;
  render() {
    const items = ["Dashboard", "Register New Court", "Update Existing Court", "Profile", "Logout"];
    return html`
      <aside class="side">
        <h2>MohMain</h2>
        <h5>zaimal</h5>
        <nav class="menu">${items.map((t, i) => html`<a class="item ${i === 2 ? "on" : ""}">${t}</a>`)}</nav>
      </aside>
      <main class="main">
        <div class="well">
          <h4>Update Existing Court</h4>
          ${COURTS.map(c => html`<section class="court">
            <h4 class="name">${c.name}</h4>
            <p>Court Location : ${c.location}</p>
            <p>Google Map Link : <a>${c.link}</a></p>
            <p>Court Price : ${c.price}</p>
            <p>Total Court : ${c.total}</p>
            <p>Open Time : ${c.open}</p>
            <p>Close Time : ${c.close}</p>
            <p>Court Description : ${c.about}</p>
            <div class="buttons"><div class="btn">Update Court</div><div class="btn del">Delete Court</div></div>
          </section>`)}
        </div>
      </main>`;
  }
}

@customElement("app-root")
class AppRoot extends LitElement {
  static styles = css`
    :host { display: flex; flex-direction: column; width: 1920px; height: 1080px; overflow: hidden; background: #fff; }
    task-bar, tab-strip, tool-bar, bookmark-bar { flex: none; }
  `;
  render() {
    return html`<task-bar></task-bar><tab-strip></tab-strip><tool-bar></tool-bar><bookmark-bar></bookmark-bar><court-page></court-page>`;
  }
}
